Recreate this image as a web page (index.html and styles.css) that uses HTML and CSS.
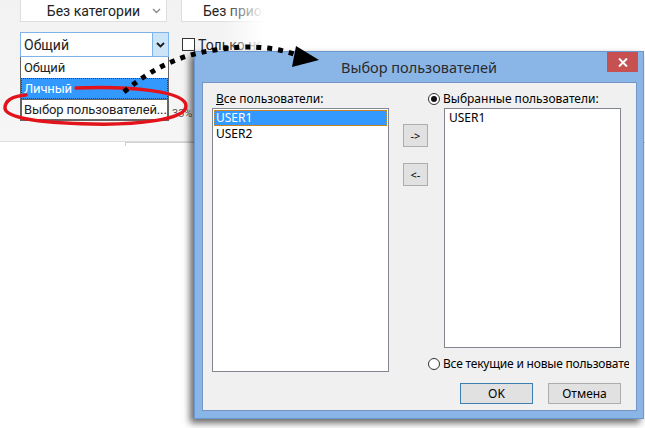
FILE: index.html
```html
<!DOCTYPE html>
<html lang="ru">
<head>
    <meta charset="UTF-8">
    <title>Выбор пользователей</title>
    <link rel="stylesheet" href="styles.css">
</head>
<body>
<div class="stage">
    <!-- Фон: панель с фильтрами -->
    <div class="app">
        <div class="toolbar">
            <div class="row">
                <div class="combo flat first">
                    <span class="combo-text">Без категории</span>
                    <svg class="chev grey" width="9" height="6" viewBox="0 0 9 6"><polyline points="1,1 4.5,4.5 8,1"/></svg>
                </div>
                <div class="combo flat second">
                    <span class="combo-text">Без приоритета</span>
                </div>
            </div>
            <div class="row">
                <div class="combo open">
                    <span class="combo-value">Общий</span>
                    <span class="drop-btn">
                        <svg class="chev" width="9" height="6" viewBox="0 0 9 6"><polyline points="1,1 4.5,4.5 8,1"/></svg>
                    </span>
                </div>
                <div class="check">
                    <span class="box"></span>
                    <span>Только назначенные мне</span>
                </div>
            </div>
            <div class="stats">33%</div>
        </div>
        <div class="content">
            <div class="tab"></div>
        </div>
        <div class="fade"></div>
    </div>

    <!-- Раскрытый список -->
    <ul class="dropdown">
        <li>Общий</li>
        <li class="selected">Личный</li>
        <li class="hover">Выбор пользователей...</li>
    </ul>

    <!-- Окно выбора пользователей -->
    <div class="dialog">
        <div class="titlebar">Выбор пользователей</div>
        <div class="close">
            <svg width="10" height="9" viewBox="0 0 10 9"><path d="M1 0.5 L9 8.5 M9 0.5 L1 8.5"/></svg>
        </div>
        <div class="client">
            <div class="col-left">
                <div class="label"><u>В</u>се пользователи:</div>
                <div class="listbox all">
                    <div class="item current">USER1</div>
                    <div class="item">USER2</div>
                </div>
            </div>
            <div class="col-mid">
                <button class="btn small">-&gt;</button>
                <button class="btn small">&lt;-</button>
            </div>
            <div class="col-right">
                <div class="radio-row">
                    <span class="radio checked"></span>
                    <span>Выбранные пользователи:</span>
                </div>
                <div class="listbox picked">
                    <div class="item">USER1</div>
                </div>
                <div class="radio-row second">
                    <span class="radio"></span>
                    <span>Все текущие и новые пользователи</span>
                </div>
                <div class="actions">
                    <button class="btn default">OK</button>
                    <button class="btn">Отмена</button>
                </div>
            </div>
        </div>
    </div>

    <!-- Пометки поверх скриншота -->
    <svg class="marks" width="645" height="428" viewBox="0 0 645 428">
        <path class="loop" d="M76 88 C130 86 186 91 186 106 C186 120 135 125 92 124 C42 123 5 118 5 108 C5 100 14 96 26 95"/>
        <path class="dots" d="M124 92 C150 70 178 55 215 50 C245 45 272 46 297 55"/>
        <polygon class="head" points="296,46 319,60 292,67"/>
    </svg>
</div>
</body>
</html>
```

FILE: styles.css
```css
body {
    margin: 0;
    font-family: "Noto Sans", sans-serif;
    background-color: #fff;
}

.stage {
    position: relative;
    width: 645px;
    height: 428px;
    overflow: hidden;
    background-color: #fff;
}

/* Фон */

.app {
    position: relative;
    height: 428px;
}

.toolbar {
    height: 142px;
    padding-left: 20px;
    background: linear-gradient(#f2f2f2, #f6f6f6);
    border-bottom: 1px solid #dcdcdc;
    box-sizing: border-box;
    font-family: Roboto, sans-serif;
    font-size: 14px;
    color: #222;
}

.row {
    display: flex;
    align-items: center;
}

.row + .row {
    margin-top: 10px;
}

.combo {
    display: flex;
    align-items: center;
    box-sizing: border-box;
    background-color: #fff;
}

.combo.flat {
    height: 22px;
    border: 1px solid #dedede;
    border-top: none;
}

.combo.first {
    width: 147px;
    justify-content: center;
    position: relative;
}

.combo.first .chev {
    position: absolute;
    right: 5px;
    top: 8px;
}

.combo.second {
    width: 150px;
    margin-left: 14px;
    padding-left: 21px;
}

.combo.open {
    width: 149px;
    height: 25px;
    border: 1px solid #7eb4ea;
    padding-left: 3px;
}

.combo-value {
    flex: 1;
}

.drop-btn {
    width: 15px;
    height: 23px;
    display: flex;
    justify-content: center;
    align-items: center;
    background-color: #cce4f7;
    border-left: 1px solid #7eb4ea;
}

.chev {
    fill: none;
    stroke: #1a1a1a;
    stroke-width: 1.8;
}

.chev.grey {
    stroke: #8a8a8a;
    stroke-width: 1.4;
}

.check {
    display: flex;
    align-items: center;
    margin-left: 13px;
    white-space: nowrap;
}

.box {
    width: 11px;
    height: 11px;
    border: 1px solid #333;
    background-color: #fff;
    margin-right: 3px;
}

.stats {
    margin: 50px 0 0 152px;
    font-size: 11px;
    color: #555;
}

.content {
    height: 285px;
}

.tab {
    margin-left: 125px;
    height: 3px;
    border-top: 1px solid #d0d0d0;
    border-left: 1px solid #d0d0d0;
}

.fade {
    position: absolute;
    left: 222px;
    top: 0;
    width: 423px;
    height: 142px;
    background: linear-gradient(to right, rgba(255, 255, 255, 0), #fff 42px);
}

/* Раскрытый список */

.dropdown {
    position: absolute;
    left: 20px;
    top: 57px;
    width: 149px;
    margin: 0;
    padding: 0;
    list-style: none;
    box-sizing: border-box;
    border: 1px solid #646464;
    border-top: none;
    background-color: #fff;
    font-family: Roboto, sans-serif;
    font-size: 13px;
    letter-spacing: -0.15px;
    color: #222;
}

.dropdown li {
    height: 19px;
    line-height: 19px;
    padding-left: 2px;
    border: 1px solid transparent;
    white-space: nowrap;
    overflow: hidden;
}

.dropdown li.selected {
    background-color: #3399ff;
    color: #fff;
    border: 1px dotted #1a3f6b;
}

.dropdown li.hover {
    border-color: #666;
}

/* Окно */

.dialog {
    position: absolute;
    left: 194px;
    top: 51px;
    width: 450px;
    height: 368px;
    box-sizing: border-box;
    background-color: #8ab5e7;
    border: 1px solid #6a97cf;
    box-shadow: -4px 4px 7px rgba(0, 0, 0, 0.6);
    display: flex;
    flex-direction: column;
}

.titlebar {
    height: 30px;
    display: flex;
    justify-content: center;
    align-items: center;
    font-size: 14.5px;
    color: #2b2b2b;
}

.close {
    position: absolute;
    top: 0;
    right: 5px;
    width: 31px;
    height: 20px;
    background-color: #c75050;
    display: flex;
    justify-content: center;
    align-items: center;
}

.close path {
    stroke: #fff;
    stroke-width: 2;
}

.client {
    flex: 1;
    margin: 0 6px 7px 7px;
    padding: 8px 0 0 9px;
    background-color: #f0f0f0;
    border: 1px solid #7596c4;
    display: flex;
    font-size: 12px;
    color: #000;
}

.label {
    height: 15px;
    line-height: 15px;
    margin: 0 0 2px 4px;
}

.listbox {
    width: 177px;
    box-sizing: border-box;
    border: 1px solid #828790;
    background-color: #fff;
    padding: 1px;
}

.listbox.all {
    height: 264px;
}

.listbox.picked {
    height: 240px;
    margin-left: 16px;
}

.item {
    height: 16px;
    line-height: 16px;
    padding-left: 2px;
}

.picked .item {
    padding-left: 3px;
}

.item.current {
    background-color: #3399ff;
    color: #fff;
    outline: 1px dotted #d08a2a;
    outline-offset: -1px;
}

.col-mid {
    display: flex;
    flex-direction: column;
    gap: 16px;
    margin-left: 14px;
    padding-top: 33px;
}

.col-right {
    width: 201px;
    overflow: hidden;
    white-space: nowrap;
}

.radio-row {
    display: flex;
    align-items: center;
    gap: 3px;
    height: 15px;
    margin-bottom: 2px;
}

.radio-row.second {
    margin: 8px 0 0;
    letter-spacing: -0.2px;
}

.radio {
    flex-shrink: 0;
    width: 10px;
    height: 10px;
    border: 1px solid #333;
    border-radius: 50%;
    background-color: #fff;
    display: flex;
    justify-content: center;
    align-items: center;
}

.radio.checked::after {
    content: "";
    width: 6px;
    height: 6px;
    border-radius: 50%;
    background-color: #111;
}

.btn {
    font-family: "Noto Sans", sans-serif;
    font-size: 12px;
    color: #000;
    background-color: #e1e1e1;
    border: 1px solid #adadad;
    padding: 0;
    height: 21px;
    width: 73px;
}

.btn.small {
    width: 25px;
    height: 23px;
    font-size: 11px;
}

.btn.default {
    border-color: #3c7fb1;
}

.actions {
    display: flex;
    justify-content: flex-end;
    gap: 15px;
    width: 193px;
    margin-top: 12px;
}

/* Пометки */

.marks {
    position: absolute;
    left: 0;
    top: 0;
    pointer-events: none;
}

.loop {
    fill: none;
    stroke: #e3131b;
    stroke-width: 3.5;
    stroke-linecap: round;
}

.dots {
    fill: none;
    stroke: #000;
    stroke-width: 5;
    stroke-dasharray: 5 6;
}

.head {
    fill: #000;
}
```
